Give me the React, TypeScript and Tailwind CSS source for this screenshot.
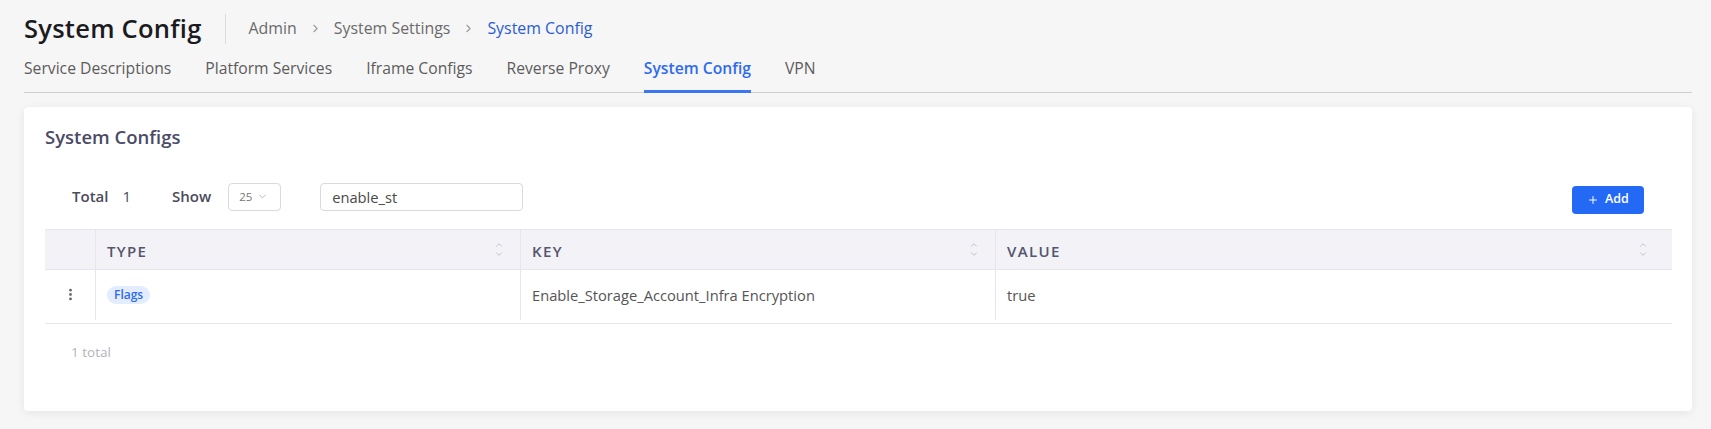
import { Plus, ChevronDown, ChevronUp, ChevronRight, EllipsisVertical } from 'lucide-react';

const tabs = ['Service Descriptions', 'Platform Services', 'Iframe Configs', 'Reverse Proxy', 'System Config', 'VPN'];

function SortIcon() {
  return (
    <span className="flex flex-col items-center text-[#b9b9c6] leading-none">
      <ChevronUp size={10} strokeWidth={2} className="-mb-[1px]" />
      <ChevronDown size={10} strokeWidth={2} />
    </span>
  );
}

export default function App() {
  return (
    <div
      className="w-full min-h-[429px] bg-[#f6f6f6] text-[#333]"
      style={{ fontFamily: '"Open Sans", "Noto Sans", sans-serif' }}
    >
      {/* Page header */}
      <div className="pl-[24px] pr-[19px] pt-[13px]">
        <div className="flex items-center h-[32px]">
          <h1 className="text-[25.5px] font-semibold text-[#1b1b1f] leading-none tracking-[0.01em]">System Config</h1>
          <div className="w-px h-[30px] bg-[#dcdcdc] mx-[23px]" />
          <nav className="flex items-center text-[15.9px] text-[#6b6b6b] gap-[12px]">
            <span>Admin</span>
            <ChevronRight size={13} className="text-[#9a9a9a]" />
            <span>System Settings</span>
            <ChevronRight size={13} className="text-[#9a9a9a]" />
            <span className="text-[#2a5bd7]">System Config</span>
          </nav>
        </div>

        {/* Tabs */}
        <div className="mt-[12px] flex gap-[34px] border-b border-[#cfcfcf] text-[15.7px] text-[#5c5c5c]">
          {tabs.map((t) => (
            <div
              key={t}
              className={
                t === 'System Config'
                  ? 'pb-[9px] border-b-[3px] border-[#3b76f0] -mb-px text-[#2f6bed] font-semibold'
                  : 'pb-[11px]'
              }
            >
              {t}
            </div>
          ))}
        </div>

        {/* Card */}
        <div className="mt-[14px] bg-white rounded-[4px] shadow-[0_2px_10px_rgba(0,0,0,0.07)] pl-[21px] pr-[20px] pt-[18px] pb-[49px]">
          <h2 className="text-[18.5px] font-semibold text-[#4b4b66] leading-[24px]">System Configs</h2>

          <div className="mt-[34px] flex items-start justify-between">
            <div className="flex items-center pl-[27px] text-[15px] text-[#4b4b5c]">
              <span className="font-semibold">Total</span>
              <span className="ml-[14px]">1</span>
              <span className="ml-[41px] font-semibold">Show</span>
              <div className="ml-[17px] w-[53px] h-[28px] border border-[#d9d9de] rounded-[4px] flex items-center pl-[10px] gap-[5px] text-[11.5px] text-[#777]">
                25
                <ChevronDown size={11} className="text-[#b0b0b8]" />
              </div>
              <div className="ml-[39px] w-[203px] h-[28px] border border-[#d9d9de] rounded-[4px] flex items-center px-[11px] text-[14.7px] text-[#4a4a4a]">
                enable_st
              </div>
            </div>
            <button className="mt-[3px] mr-[28px] w-[72px] h-[28px] rounded-[4px] bg-[#2369f6] text-white text-[12.5px] font-semibold flex items-center justify-center gap-[6px]">
              <Plus size={12} strokeWidth={2} />
              Add
            </button>
          </div>

          {/* Table */}
          <div className="mt-[15px] text-[14.7px]">
            <div className="flex h-[41px] bg-[#f2f2f7] border-y border-[#e6e6ec] text-[15px] text-[#55556d] font-semibold uppercase tracking-[0.09em]">
              <div className="w-[51px] border-r border-[#e6e6ec]" />
              <div className="w-[425px] border-r border-[#e6e6ec] flex items-center justify-between pl-[11px] pr-[16px]">
                <span className="pt-[5px]">Type</span>
                <SortIcon />
              </div>
              <div className="w-[475px] border-r border-[#e6e6ec] flex items-center justify-between pl-[11px] pr-[16px]">
                <span className="pt-[5px]">Key</span>
                <SortIcon />
              </div>
              <div className="flex-1 flex items-center justify-between pl-[11px] pr-[24px]">
                <span className="pt-[5px]">Value</span>
                <SortIcon />
              </div>
            </div>
            <div className="flex h-[54px] border-b border-[#e6e6ec] text-[#555]">
              <div className="w-[51px] h-[50px] border-r border-[#e6e6ec] flex items-center justify-center text-[#666]">
                <EllipsisVertical size={15} strokeWidth={2.5} />
              </div>
              <div className="w-[425px] h-[50px] border-r border-[#e6e6ec] flex items-center pl-[11px]">
                <span className="px-[7px] h-[18px] flex items-center rounded-full bg-[#e3edff] text-[#2f6bed] text-[12px] font-semibold">
                  Flags
                </span>
              </div>
              <div className="w-[475px] h-[50px] border-r border-[#e6e6ec] flex items-center pl-[11px]">
                Enable_Storage_Account_Infra Encryption
              </div>
              <div className="flex-1 h-[50px] flex items-center pl-[11px]">true</div>
            </div>
          </div>

          <div className="mt-[18px] pl-[26px] text-[13.5px] text-[#b3b3bb]">1 total</div>
        </div>
      </div>
    </div>
  );
}
